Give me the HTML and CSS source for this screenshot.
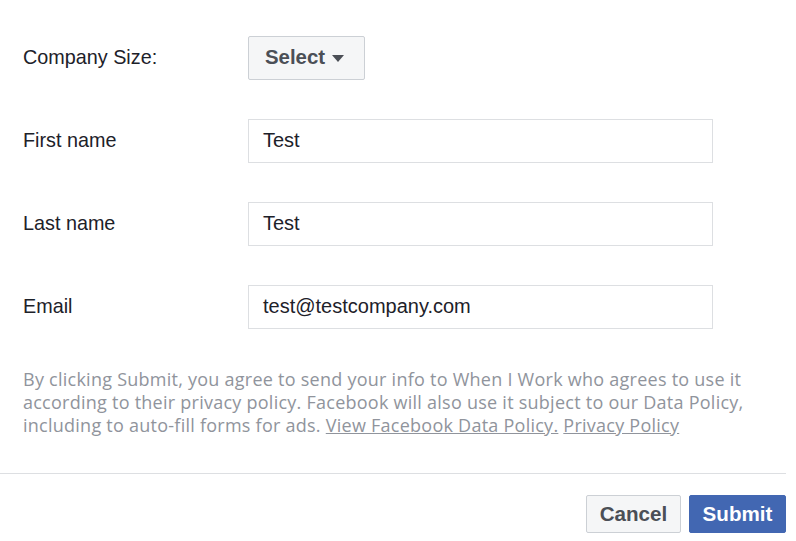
FILE: index.html
```html
<!DOCTYPE html>
<html>
<head>
<meta charset="utf-8">
<link rel="stylesheet" href="styles.css">
</head>
<body>
<div class="form">
  <div class="row">
    <div class="label">Company Size:</div>
    <button class="select">Select <span class="caret"></span></button>
  </div>
  <div class="row">
    <div class="label">First name</div>
    <div class="input">Test</div>
  </div>
  <div class="row">
    <div class="label">Last name</div>
    <div class="input">Test</div>
  </div>
  <div class="row">
    <div class="label">Email</div>
    <div class="input">test@testcompany.com</div>
  </div>
  <p class="disclaimer">By clicking Submit, you agree to send your info to When I Work who agrees to use it according to their privacy policy. Facebook will also use it subject to our Data Policy, including to auto-fill forms for ads. <a href="#">View Facebook Data Policy.</a> <a href="#">Privacy Policy</a></p>
</div>
<div class="footer">
  <button class="btn cancel">Cancel</button>
  <button class="btn submit">Submit</button>
</div>
</body>
</html>
```
FILE: styles.css
```css
html, body {
  margin: 0;
  padding: 0;
  background: #fff;
  font-family: "Liberation Sans", Arial, sans-serif;
}
.form {
  padding: 36px 0 0 23px;
  display: flex;
  flex-direction: column;
  gap: 40px;
}
.row {
  display: flex;
  align-items: center;
  height: 43px;
}
.label {
  width: 225px;
  font-size: 19.8px;
  color: #1d2129;
}
.select {
  height: 44px;
  width: 117px;
  box-sizing: border-box;
  background: #f5f6f7;
  border: 1px solid #ccd0d5;
  border-radius: 2px;
  font-family: inherit;
  font-weight: bold;
  font-size: 20.4px;
  color: #4b4f56;
  display: flex;
  align-items: center;
  padding: 0 0 0 16px;
  gap: 7px;
}
.caret {
  width: 0;
  height: 0;
  border-left: 6.5px solid transparent;
  border-right: 6.5px solid transparent;
  border-top: 7px solid #4b4f56;
  margin-top: 1px;
}
.input {
  width: 465px;
  height: 44px;
  box-sizing: border-box;
  border: 1px solid #dddfe2;
  display: flex;
  align-items: center;
  padding-left: 14px;
  font-size: 20px;
  color: #1d2129;
}
.disclaimer {
  margin: 0;
  width: 750px;
  font-family: "Open Sans", "Liberation Sans", sans-serif;
  font-size: 18px;
  letter-spacing: 0.25px;
  line-height: 23px;
  color: #90949c;
}
.disclaimer a {
  display: inline-block;
  line-height: 23px;
  color: #90949c;
}
.footer {
  margin-top: 36px;
  width: 786px;
  border-top: 1px solid #dddfe2;
  padding-top: 21px;
  display: flex;
  justify-content: flex-end;
  gap: 8px;
}
.btn {
  height: 38px;
  box-sizing: border-box;
  border-radius: 2px;
  font-family: inherit;
  font-weight: bold;
  font-size: 20.6px;
  padding: 0;
}
.cancel {
  width: 95px;
  background: #f5f6f7;
  border: 1px solid #ccd0d5;
  color: #4b4f56;
}
.submit {
  width: 97px;
  background: #4267b2;
  border: 1px solid #4267b2;
  color: #fff;
}
```
